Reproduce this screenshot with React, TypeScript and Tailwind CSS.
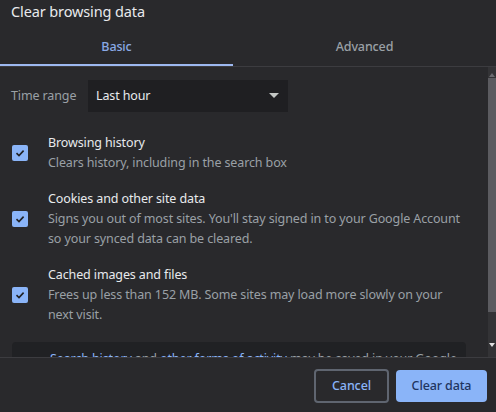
import React from 'react';

const ITEMS = [
  {
    title: 'Browsing history',
    lines: ['Clears history, including in the search box'],
  },
  {
    title: 'Cookies and other site data',
    lines: [
      "Signs you out of most sites. You'll stay signed in to your Google Account",
      'so your synced data can be cleared.',
    ],
  },
  {
    title: 'Cached images and files',
    lines: [
      'Frees up less than 152 MB. Some sites may load more slowly on your',
      'next visit.',
    ],
  },
];

function Check() {
  return (
    <div className="w-4 h-4 rounded-[2px] bg-[#8ab4f8] flex items-center justify-center shrink-0">
      <svg width="12" height="12" viewBox="0 0 12 12">
        <path d="M2.5 6.2 L5 8.6 L9.6 3.6" fill="none" stroke="#202124" strokeWidth="1.6" />
      </svg>
    </div>
  );
}

export default function App() {
  return (
    <div
      className="w-[496px] h-[412px] bg-[#29292c] text-[#e8eaed] flex flex-col overflow-hidden text-[12.5px] tracking-[-0.12px]"
      style={{ fontFamily: '"Noto Sans", "Open Sans", sans-serif' }}
    >
      <div className="h-[30px] pl-[11px] pb-[6px] flex items-center text-[14.5px] text-[#e8eaed]">
        Clear browsing data
      </div>

      <div className="flex h-[37px] border-b border-[#3c3c40]">
        <div className="w-[233px] flex flex-col">
          <div className="flex-1 flex items-center justify-center text-[#8aa9e6] font-medium">Basic</div>
          <div className="h-[2px] bg-[#9db8f0]" />
        </div>
        <div className="flex-1 flex items-center justify-center text-[#9aa0a6] font-medium pb-[2px]">
          Advanced
        </div>
      </div>

      <div className="h-[291px] flex border-b border-[#3c3c40]">
        <div className="flex-1 overflow-hidden pt-[13px]">
          <div className="flex items-center pl-[11px]">
            <span className="w-[77px] text-[#9aa0a6]">Time range</span>
            <div className="w-[200px] h-[32px] bg-[#1f1f22] flex items-center justify-between pl-[8px] pr-[9px]">
              <span className="text-[#e8eaed]">Last hour</span>
              <svg width="10" height="6" viewBox="0 0 10 6">
                <path d="M0 0 L10 0 L5 5 Z" fill="#c4c7c5" />
              </svg>
            </div>
          </div>

          <div className="flex flex-col gap-[15px] mt-[21px]">
            {ITEMS.map(item => (
              <div key={item.title} className="flex items-center pl-[12px]">
                <Check />
                <div className="ml-[20px] leading-[20px]">
                  <div className="text-[#e8eaed]">{item.title}</div>
                  {item.lines.map(l => (
                    <div key={l} className="text-[#9aa0a6] leading-[20.5px]">{l}</div>
                  ))}
                </div>
              </div>
            ))}
          </div>

          <div className="mt-[16px] ml-[12px] w-[454px] h-[40px] bg-[#202124] rounded-t-[4px] pl-[38px] pt-[8px] text-[#9aa0a6] whitespace-nowrap overflow-hidden">
            <span className="text-[#8ab4f8] underline">Search history</span> and{' '}
            <span className="text-[#8ab4f8] underline">other forms of activity</span> may be saved in your Google
          </div>
        </div>

        <div className="w-[8px] bg-[#333336] flex flex-col items-center">
          <div className="h-[10px] flex items-end justify-center">
            <svg width="6" height="4" viewBox="0 0 6 4">
              <path d="M0 4 L6 4 L3 0 Z" fill="#6b6b70" />
            </svg>
          </div>
          <div className="mt-[1px] h-[234px] w-full bg-[#5b5b60]" />
          <div className="flex-1" />
          <div className="h-[14px] flex items-start justify-center">
            <svg width="6" height="4" viewBox="0 0 6 4">
              <path d="M0 0 L6 0 L3 4 Z" fill="#e0e0e0" />
            </svg>
          </div>
        </div>
      </div>

      <div className="flex-1 flex items-center justify-end gap-[7px] pr-[9px] pt-[2px]">
        <button className="w-[75px] h-[34px] rounded-[4px] border-2 border-[#5f6570] text-[#8ab4f8] font-medium bg-[#29292c]">
          Cancel
        </button>
        <button className="w-[91px] h-[32px] rounded-[4px] bg-[#8ab4f8] text-[#1f3560] font-medium">
          Clear data
        </button>
      </div>
    </div>
  );
}
